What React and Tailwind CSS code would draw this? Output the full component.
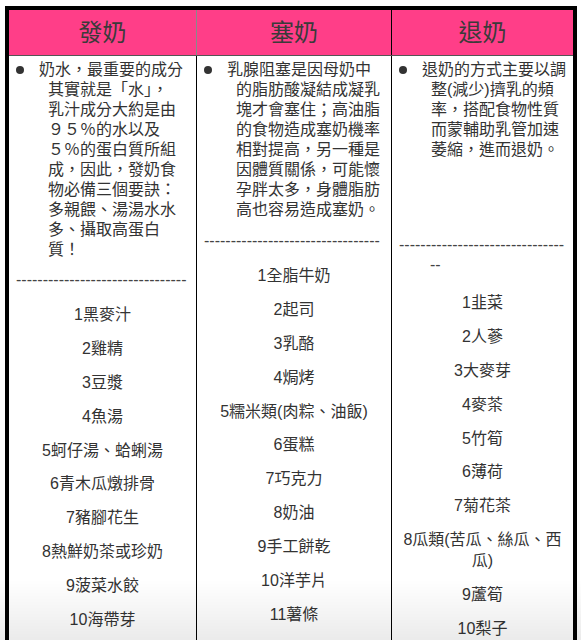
import React from "react";

const FONT = "font-['Liberation_Sans','Noto_Sans_CJK_TC',sans-serif]";

const columns = [
  {
    title: "發奶",
    lines: [
      "奶水，最重要的成分",
      "其實就是「水」，",
      "乳汁成分大約是由",
      "９５％的水以及",
      "５％的蛋白質所組",
      "成，因此，發奶食",
      "物必備三個要訣：",
      "多親餵、湯湯水水",
      "多、攝取高蛋白",
      "質！",
    ],
    dashes: ["--------------------------------"],
    dashGap: "mt-[10px]",
    listGap: "mt-[14px]",
    items: [
      "1黑麥汁",
      "2雞精",
      "3豆漿",
      "4魚湯",
      "5蚵仔湯、蛤蜊湯",
      "6青木瓜燉排骨",
      "7豬腳花生",
      "8熱鮮奶茶或珍奶",
      "9菠菜水餃",
      "10海帶芽",
    ],
  },
  {
    title: "塞奶",
    lines: [
      "乳腺阻塞是因母奶中",
      "的脂肪酸凝結成凝乳",
      "塊才會塞住；高油脂",
      "的食物造成塞奶機率",
      "相對提高，另一種是",
      "因體質關係，可能懷",
      "孕胖太多，身體脂肪",
      "高也容易造成塞奶。",
    ],
    dashes: ["---------------------------------"],
    dashGap: "mt-[11px]",
    listGap: "mt-[14px]",
    items: [
      "1全脂牛奶",
      "2起司",
      "3乳酪",
      "4焗烤",
      "5糯米類(肉粽、油飯)",
      "6蛋糕",
      "7巧克力",
      "8奶油",
      "9手工餅乾",
      "10洋芋片",
      "11薯條",
      "12炸雞",
    ],
  },
  {
    title: "退奶",
    lines: [
      "退奶的方式主要以調",
      "整(減少)擠乳的頻",
      "率，搭配食物性質",
      "而蒙輔助乳管加速",
      "萎縮，進而退奶。",
    ],
    dashes: ["-------------------------------", "--"],
    dashGap: "mt-[75px]",
    listGap: "mt-[17px]",
    items: [
      "1韭菜",
      "2人蔘",
      "3大麥芽",
      "4麥茶",
      "5竹筍",
      "6薄荷",
      "7菊花茶",
      "8瓜類(苦瓜、絲瓜、西瓜)",
      "9蘆筍",
      "10梨子",
    ],
  },
];

const Column = ({ col, divider }) => (
  <div className={`pl-[7px] pr-[7px] pt-[4px] pb-10 ${divider}`}>
    <div className="flex">
      <span className="mt-[6px] h-2 w-2 shrink-0 rounded-full bg-[#333]" />
      <p className="ml-[15px] pl-[9px] -indent-[9px] whitespace-nowrap text-[16px] leading-[20px]">
        {col.lines.map((line, i) => (
          <React.Fragment key={i}>
            {line}
            {i < col.lines.length - 1 && <br />}
          </React.Fragment>
        ))}
      </p>
    </div>
    <div className={`${col.dashGap} text-[16px] leading-[20px] text-[#444] whitespace-nowrap`}>
      {col.dashes.map((d, i) => (
        <div key={i} className={i > 0 ? "pl-[31px]" : ""}>
          {d}
        </div>
      ))}
    </div>
    <div className={`${col.listGap} flex flex-col gap-[12.9px] text-center text-[16px] leading-[21px]`}>
      {col.items.map((item) => (
        <p key={item}>{item}</p>
      ))}
    </div>
  </div>
);

export default function App() {
  return (
    <div className={`relative min-h-screen bg-white text-[#333] ${FONT}`}>
      <div className="ml-[5px] mt-[6px] w-[572px] border-x-4 border-t-4 border-black">
        <div className="grid h-[46px] grid-cols-[188px_195px_181px] border-b border-[#555] bg-[#ff3e88]">
          {columns.map((col, i) => (
            <div
              key={col.title}
              className={`flex items-center justify-center text-[24px] text-[#3a3a3a] ${
                i === 0 ? "border-r border-[#8a8a8a]" : i === 1 ? "border-r border-black" : ""
              }`}
            >
              {col.title}
            </div>
          ))}
        </div>
        <div className="grid grid-cols-[188px_195px_181px]">
          <Column col={columns[0]} divider="border-r border-black" />
          <Column col={columns[1]} divider="border-r border-black" />
          <Column col={columns[2]} divider="" />
        </div>
      </div>
      <div className="pointer-events-none fixed inset-x-0 bottom-0 h-[60px] bg-linear-to-b from-black/0 to-black/[0.08]" />
    </div>
  );
}
